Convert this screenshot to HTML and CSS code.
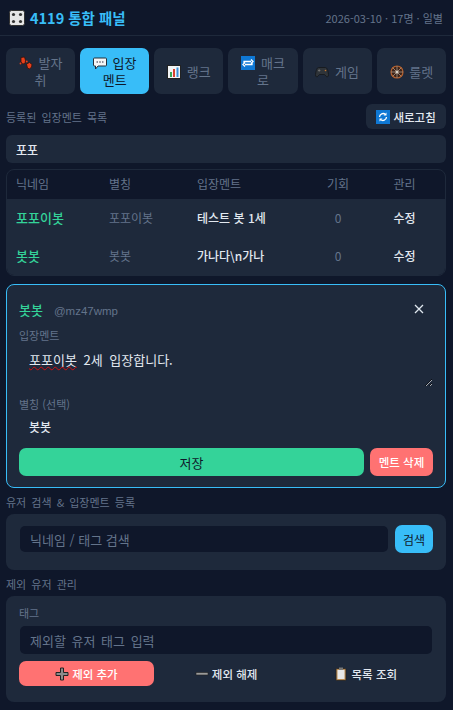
FILE: index.html
```html
<!DOCTYPE html>
<html lang="ko">
  <head>
    <meta charset="UTF-8" />
    <meta name="viewport" content="width=device-width, initial-scale=1.0" />
    <title>4119 통합 패널</title>
    <link rel="stylesheet" href="styles.css">
  </head>
  <body>
    <header class="topbar">
      <h1 class="title">
        <svg class="ico-dice" viewBox="0 0 16 16"><rect x="0.5" y="0.5" width="15" height="15" rx="2" fill="#e6e6e6" stroke="#333"/><circle cx="4.5" cy="4.5" r="1.6" fill="#333"/><circle cx="11.5" cy="4.5" r="1.6" fill="#333"/><circle cx="4.5" cy="11.5" r="1.6" fill="#333"/><circle cx="11.5" cy="11.5" r="1.6" fill="#333"/></svg>
        <span>4119 통합 패널</span>
      </h1>
      <div class="meta">2026-03-10 · 17명 · 일별</div>
    </header>

    <main class="page">
      <nav class="tabs">
        <button class="tab"><span><svg class="ico" viewBox="0 0 14 14"><path d="M2 1.500l3.500-.5 1 3.500-.5 3-2.500.5L2 5.500zM7.500 8l3-1.500 2.500 2-.5 2.500-2 2-2-1z" fill="#e8401c" stroke="#3a1008" stroke-width=".8"/><circle cx="1.500" cy="7.500" r=".9" fill="#e8401c"/><circle cx="7.800" cy="5.500" r=".9" fill="#e8401c"/></svg> 발자취</span></button>
        <button class="tab active"><span><svg class="ico" viewBox="0 0 14 14"><path d="M1.5 2h11a1 1 0 0 1 1 1v6a1 1 0 0 1-1 1H5l-2.500 3v-3h-1a1 1 0 0 1-1-1V3a1 1 0 0 1 1-1z" fill="#f4f6f7" stroke="#22303c"/><circle cx="4.200" cy="6" r=".8" fill="#445"/><circle cx="7" cy="6" r=".8" fill="#445"/><circle cx="9.800" cy="6" r=".8" fill="#445"/></svg> 입장멘트</span></button>
        <button class="tab"><span><svg class="ico" viewBox="0 0 14 14"><rect x="0.500" y="0.500" width="13" height="13" fill="#f2f4f5" stroke="#222"/><rect x="3" y="7" width="2" height="5" fill="#3aa655"/><rect x="6" y="4" width="2" height="8" fill="#d9402e"/><rect x="9.500" y="2.500" width="2" height="9.500" fill="#3a8fd9"/></svg> 랭크</span></button>
        <button class="tab"><span><svg class="ico" viewBox="0 0 14 14"><rect width="14" height="14" fill="#0f78d4"/><path d="M3 7V5.500h7M10 3.500l2 2-2 2M11 7v1.500H4M4 6.500l-2 2 2 2" fill="none" stroke="#fff" stroke-width="1.300"/></svg> 매크로</span></button>
        <button class="tab"><span><svg class="ico" viewBox="0 0 14 14"><path d="M3.500 2.500h7c1.500 0 2.500 3 3 7 .2 2.500-1.500 3-2.500 1.700L9.500 9.500h-5L3 11.200C2 12.500.3 12 .5 9.500c.5-4 1.500-7 3-7z" fill="#2f3439" stroke="#14171a" stroke-width=".8"/><circle cx="10.500" cy="5.500" r=".8" fill="#c9772e"/><path d="M3 5.500h2.400M4.200 4.300v2.400" stroke="#777" stroke-width=".8"/></svg> 게임</span></button>
        <button class="tab"><span><svg class="ico" viewBox="0 0 14 14"><circle cx="7" cy="7" r="6" fill="#3c2218" stroke="#b8622e" stroke-width="1.200"/><path d="M7 1v12M1 7h12M2.800 2.800l8.400 8.400M11.200 2.800l-8.400 8.400" stroke="#b9aa98" stroke-width=".7"/><circle cx="7" cy="7" r="1.500" fill="#d8d0c4"/></svg> 룰렛</span></button>
      </nav>

      <div class="section-head">
        <span class="section-label">등록된 입장멘트 목록</span>
        <button class="refresh"><svg class="ico" viewBox="0 0 14 14"><rect width="14" height="14" fill="#0f78d4"/><path d="M3.500 7a3.500 3.500 0 0 1 6-2.400M10.500 7a3.500 3.500 0 0 1-6 2.400" fill="none" stroke="#fff" stroke-width="1.300"/><path d="M10.500 2.500v3h-3zM3.500 11.500v-3h3z" fill="#fff"/></svg> 새로고침</button>
      </div>

      <input class="filter" type="text" value="포포" />

      <div class="table-wrap">
        <table class="list">
          <thead>
            <tr><th class="col-nick">닉네임</th><th class="col-alias">별칭</th><th class="col-ment">입장멘트</th><th class="col-num">기회</th><th class="col-act">관리</th></tr>
          </thead>
          <tbody>
            <tr><td class="nick">포포이봇</td><td class="alias">포포이봇</td><td class="ment">테스트 봇 1세</td><td class="num">0</td><td class="act">수정</td></tr>
            <tr><td class="nick">봇봇</td><td class="alias">봇봇</td><td class="ment">가나다\n가나</td><td class="num">0</td><td class="act">수정</td></tr>
          </tbody>
        </table>
      </div>

      <section class="card edit">
        <div class="edit-head">
          <div><span class="edit-name">봇봇</span><span class="edit-tag">@mz47wmp</span></div>
          <button class="close" aria-label="닫기"><svg viewBox="0 0 10 10" width="10" height="10"><path d="M1 1l8 8M9 1l-8 8" stroke="#dfe7ee" stroke-width="1.300"/></svg></button>
        </div>
        <label class="field-label">입장멘트</label>
        <div class="area-box">
          <textarea class="area" spellcheck="false">포포이봇 2세 입장합니다.</textarea>
          <span class="squiggle">포포이봇</span>
        </div>
        <label class="field-label alias-label">별칭 (선택)</label>
        <input class="plain" type="text" value="봇봇" />
        <div class="edit-actions">
          <button class="btn save">저장</button>
          <button class="btn del">멘트 삭제</button>
        </div>
      </section>

      <div class="section-label block-label">유저 검색 &amp; 입장멘트 등록</div>
      <section class="card search">
        <input class="dark-input" type="text" placeholder="닉네임 / 태그 검색" />
        <button class="btn find">검색</button>
      </section>

      <div class="section-label block-label">제외 유저 관리</div>
      <section class="card exclude">
        <label class="field-label">태그</label>
        <input class="dark-input tag-input" type="text" placeholder="제외할 유저 태그 입력" />
        <div class="exclude-actions">
          <button class="btn add"><svg class="ico" viewBox="0 0 14 14"><path d="M5.500 1h3v4.500H13v3H8.500V13h-3V8.500H1v-3h4.500z" fill="#8b8b8b" stroke="#222"/></svg> 제외 추가</button>
          <button class="btn ghost"><svg class="ico" viewBox="0 0 14 14"><rect x="1" y="5.500" width="12" height="2.500" fill="#9a9a9a" stroke="#222" stroke-width=".6"/></svg> 제외 해제</button>
          <button class="btn ghost"><svg class="ico" viewBox="0 0 14 14"><rect x="2" y="1.500" width="10" height="12" rx="1" fill="#b98a52" stroke="#222" stroke-width=".8"/><rect x="3.500" y="3" width="7" height="9" fill="#e8e8e8"/><rect x="5" y="0.500" width="4" height="2.500" fill="#777"/></svg> 목록 조회</button>
        </div>
      </section>
    </main>
  </body>
</html>
```

FILE: styles.css
```css
* {
  box-sizing: border-box;
}
body {
  margin: 0;
  background-color: #0f172a;
  color: #e2e8f0;
  font-family: "Noto Sans CJK KR", "Noto Sans", sans-serif;
  font-size: 13px;
}
button, input, textarea {
  font-family: inherit;
}
.ico {
  width: 14px;
  height: 14px;
  vertical-align: -2px;
}
.topbar {
  height: 36px;
  padding: 0 10px 0 9px;
  display: flex;
  justify-content: space-between;
  align-items: center;
  border-bottom: 1px solid #1e293b;
}
.title {
  margin: 0;
  display: flex;
  align-items: center;
  gap: 5px;
  font-size: 14.500px;
  font-weight: 700;
  color: #38bdf8;
}
.ico-dice {
  width: 16px;
  height: 16px;
}
.meta {
  font-size: 11px;
  color: #64748b;
}
.page {
  padding: 12px 7px 8px 6px;
}
.tabs {
  display: grid;
  grid-template-columns: repeat(6, 1fr);
  gap: 5px;
}
.tab {
  height: 46px;
  padding: 0 8px;
  border: none;
  border-radius: 7px;
  background-color: #1e293b;
  color: #64748b;
  font-size: 13px;
  line-height: 17px;
  word-spacing: 2px;
}
.tab.active {
  background-color: #38bdf8;
  color: #0f172a;
}
.section-head {
  margin-top: 10px;
  display: flex;
  justify-content: space-between;
  align-items: center;
}
.section-label {
  font-size: 11px;
  word-spacing: 2px;
  color: #64748b;
}
.refresh {
  width: 80px;
  height: 25px;
  padding: 0;
  border: none;
  border-radius: 6px;
  background-color: #1e293b;
  color: #e2e8f0;
  font-size: 11.500px;
  font-weight: 500;
}
.filter {
  display: block;
  width: 100%;
  height: 28px;
  margin-top: 6px;
  padding: 0 10px;
  border: none;
  border-radius: 6px;
  background-color: #1e293b;
  color: #e2e8f0;
  font-size: 12px;
  font-weight: 500;
}
.table-wrap {
  margin-top: 6px;
  border: 1px solid #1e293b;
  border-radius: 8px;
  overflow: hidden;
}
.list {
  width: 100%;
  border-collapse: collapse;
  table-layout: fixed;
  font-size: 12px;
}
.list th {
  height: 29px;
  padding: 0 0 2px 9px;
  text-align: left;
  font-weight: 400;
  color: #64748b;
}
.list td {
  height: 38px;
  padding: 0 0 2px 9px;
  background-color: #1e293b;
}
.col-nick { width: 93px; }
.col-alias { width: 88px; }
.col-ment { width: 118px; }
.col-num { width: 64px; }
.list .col-num, .list .num {
  padding: 0 0 2px;
  text-align: center;
}
.list .col-act, .list .act {
  padding: 0 6px 2px 0;
  text-align: center;
}
.list .nick {
  color: #34d399;
  font-size: 13px;
  font-weight: 500;
}
.alias, .num {
  color: #64748b;
}
.ment, .act {
  color: #e2e8f0;
  font-weight: 500;
}
.card {
  margin-top: 8px;
  padding: 13px;
  border-radius: 8px;
  background-color: #1e293b;
}
.edit {
  height: 204px;
  border: 1px solid #38bdf8;
  padding: 13px 12px 10px;
}
.edit-head {
  height: 22px;
  display: flex;
  justify-content: space-between;
  align-items: center;
}
.edit-name {
  color: #34d399;
  font-size: 13px;
  font-weight: 500;
}
.edit-tag {
  margin-left: 11px;
  color: #64748b;
  font-size: 11.500px;
  font-family: "Liberation Sans", sans-serif;
}
.close {
  padding: 0 9px 0 0;
  border: none;
  background: none;
  display: flex;
}
.field-label {
  display: block;
  margin-top: 8px;
  font-size: 11px;
  line-height: 14px;
  color: #64748b;
}
.area-box {
  position: relative;
  height: 42px;
  margin-top: 3px;
}
.area {
  display: block;
  width: 100%;
  height: 42px;
  padding: 6px 10px;
  border: none;
  background: none;
  color: #e2e8f0;
  font-size: 13px;
  line-height: 18px;
  word-spacing: 3px;
  outline: none;
}
.squiggle {
  position: absolute;
  left: 10px;
  top: 6px;
  font-size: 13px;
  line-height: 18px;
  color: transparent;
  text-decoration: underline wavy #d01010 1px;
  text-decoration-skip-ink: none;
  pointer-events: none;
}
.alias-label {
  margin-top: 10px;
}
.plain {
  display: block;
  width: 100%;
  height: 28px;
  margin-top: 1px;
  padding: 0 10px;
  border: none;
  background: none;
  color: #e2e8f0;
  font-size: 12px;
  font-weight: 500;
  outline: none;
}
.edit-actions {
  display: flex;
  gap: 6px;
  margin-top: 8px;
}
.btn {
  height: 28px;
  padding: 0;
  border: none;
  border-radius: 7px;
  font-size: 11.500px;
  font-weight: 500;
}
.save {
  flex: 1;
  background-color: #34d399;
  color: #0f172a;
  font-size: 13px;
  font-weight: 400;
}
.del {
  width: 63px;
  background-color: #ff7272;
  color: #fff;
}
.block-label {
  margin-top: 7px;
  line-height: 15px;
}
.search {
  margin-top: 4px;
  height: 56px;
  padding: 11px 13px;
  display: flex;
  align-items: flex-start;
  gap: 7px;
}
.dark-input {
  flex: 1;
  height: 26px;
  padding: 0 10px;
  border: none;
  border-radius: 5px;
  background-color: #0f172a;
  color: #e2e8f0;
  font-size: 13px;
}
.search .dark-input {
  margin: 1px 0 0 1px;
}
.dark-input::placeholder {
  color: #64748b;
  opacity: 1;
}
.find {
  width: 38px;
  background-color: #38bdf8;
  color: #0f172a;
  font-size: 12px;
  font-weight: 400;
}
.exclude {
  margin-top: 4px;
  height: 106px;
  padding: 10px 13px;
}
.exclude .field-label {
  margin-top: 0;
}
.tag-input {
  display: block;
  width: calc(100% - 2px);
  height: 28px;
  margin: 6px 0 0 1px;
  word-spacing: 2px;
}
.exclude-actions {
  display: grid;
  grid-template-columns: repeat(3, 1fr);
  gap: 5px;
  margin-top: 7px;
}
.exclude-actions .btn {
  height: 25px;
}
.add {
  background-color: #ff7272;
  color: #fff;
}
.ghost {
  background: none;
  color: #e2e8f0;
}
```
